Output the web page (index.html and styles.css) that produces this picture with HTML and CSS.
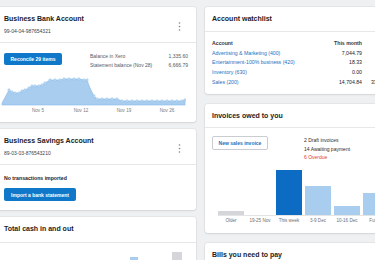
FILE: index.html
```html
<!DOCTYPE html>
<html lang="en">
<head>
    <meta charset="UTF-8">
    <meta name="viewport" content="width=device-width, initial-scale=1.0">
    <title>Dashboard</title>
    <link rel="stylesheet" href="styles.css">
</head>
<body>
    <div class="board">
        <!-- left column -->
        <div class="col col-left">
            <div class="card bank-card">
                <div class="card-head acct-head">
                    <div>
                        <div class="card-title">Business Bank Account</div>
                        <div class="acct-no">99-04-04-987654321</div>
                    </div>
                    <svg class="kebab" width="3" height="9" viewBox="0 0 3 9"><circle cx="1.5" cy="1" r="0.8"/><circle cx="1.5" cy="4.5" r="0.8"/><circle cx="1.5" cy="8" r="0.8"/></svg>
                </div>
                <div class="bank-body">
                    <div class="bank-top">
                        <button class="btn-blue btn-reconcile">Reconcile 29 items</button>
                        <table class="balances">
                            <tr><td>Balance in Xero</td><td class="num">1,335.60</td></tr>
                            <tr><td>Statement balance (Nov 28)</td><td class="num">6,666.79</td></tr>
                        </table>
                    </div>
                    <svg class="bank-chart" width="186" height="40" viewBox="3 76 186 40">
                        <path class="area" d="M5 106 L5 105 L12 92 L15 94 L18 95 L22 95 L25 93 L28 92 L32 90 L35 88 L38 88 L42 88 L45 87 L48 85 L53 82 L58 82 L63 82 L67 81 L72 81 L77 81 L82 81 L87 82 L90 82 L93 90 L97 98 L100 101 L105 101 L110 101 L115 101 L120 101 L125 103 L130 103 L135 103 L140 103 L145 103 L150 103 L155 103 L160 103 L165 103 L170 103 L175 103 L180 103 L185 103 L188 102 L188 107 L5 107 Z"/>
                        <g class="dots">
                            <circle cx="12" cy="92" r="1.2"/><circle cx="15" cy="94" r="1.2"/><circle cx="18" cy="95" r="1.2"/><circle cx="22" cy="95" r="1.2"/><circle cx="25" cy="93" r="1.2"/><circle cx="28" cy="92" r="1.2"/><circle cx="32" cy="90" r="1.2"/><circle cx="35" cy="88" r="1.2"/><circle cx="38" cy="88" r="1.2"/><circle cx="42" cy="88" r="1.2"/><circle cx="45" cy="87" r="1.2"/><circle cx="48" cy="85" r="1.2"/><circle cx="53" cy="82" r="1.2"/><circle cx="58" cy="82" r="1.2"/><circle cx="63" cy="82" r="1.2"/><circle cx="67" cy="81" r="1.2"/><circle cx="72" cy="81" r="1.2"/><circle cx="77" cy="81" r="1.2"/><circle cx="82" cy="81" r="1.2"/><circle cx="87" cy="82" r="1.2"/><circle cx="90" cy="82" r="1.2"/><circle cx="97" cy="98" r="1.2"/><circle cx="100" cy="101" r="1.2"/><circle cx="105" cy="101" r="1.2"/><circle cx="110" cy="101" r="1.2"/><circle cx="115" cy="101" r="1.2"/><circle cx="120" cy="101" r="1.2"/><circle cx="125" cy="103" r="1.2"/><circle cx="130" cy="103" r="1.2"/><circle cx="135" cy="103" r="1.2"/><circle cx="140" cy="103" r="1.2"/><circle cx="145" cy="103" r="1.2"/><circle cx="150" cy="103" r="1.2"/><circle cx="155" cy="103" r="1.2"/><circle cx="160" cy="103" r="1.2"/><circle cx="165" cy="103" r="1.2"/><circle cx="170" cy="103" r="1.2"/><circle cx="175" cy="103" r="1.2"/><circle cx="180" cy="103" r="1.2"/><circle cx="185" cy="103" r="1.2"/><circle cx="188" cy="102" r="1.2"/>
                        </g>
                        <g class="axis-labels">
                            <text x="41" y="114">Nov 5</text>
                            <text x="84" y="114">Nov 12</text>
                            <text x="127" y="114">Nov 19</text>
                            <text x="170" y="114">Nov 26</text>
                        </g>
                    </svg>
                </div>
            </div>

            <div class="card savings-card">
                <div class="card-head acct-head">
                    <div>
                        <div class="card-title">Business Savings Account</div>
                        <div class="acct-no">89-03-03-876543210</div>
                    </div>
                    <svg class="kebab" width="3" height="9" viewBox="0 0 3 9"><circle cx="1.5" cy="1" r="0.8"/><circle cx="1.5" cy="4.5" r="0.8"/><circle cx="1.5" cy="8" r="0.8"/></svg>
                </div>
                <div class="savings-body">
                    <div class="no-tx">No transactions imported</div>
                    <button class="btn-blue btn-import">Import a bank statement</button>
                </div>
            </div>

            <div class="card cash-card">
                <div class="card-head plain-head">
                    <div class="card-title">Total cash in and out</div>
                </div>
                <div class="cash-bars">
                    <div class="cash-bar in"></div>
                    <div class="cash-bar out"></div>
                </div>
            </div>
        </div>

        <!-- right column -->
        <div class="col col-right">
            <div class="card watch-card">
                <div class="card-head plain-head">
                    <div class="card-title">Account watchlist</div>
                </div>
                <div class="watch-table">
                    <div class="th">Account</div><div class="th num">This month</div><div class="th num">YTD</div>
                    <a class="link">Advertising &amp; Marketing (400)</a><div class="num">7,044.79</div><div class="num">844.00</div>
                    <a class="link">Entertainment-100% business (420)</a><div class="num">18.33</div><div class="num">96.40</div>
                    <a class="link">Inventory (630)</a><div class="num">0.00</div><div class="num">0.00</div>
                    <a class="link">Sales (200)</a><div class="num">14,704.84</div><div class="num">33,421.54</div>
                </div>
            </div>

            <div class="card invoice-card">
                <div class="card-head plain-head">
                    <div class="card-title">Invoices owed to you</div>
                </div>
                <div class="invoice-body">
                    <div class="invoice-top">
                        <button class="btn-outline">New sales invoice</button>
                        <div class="inv-stats">
                            <div>2 Draft invoices</div><div class="num">540.00</div>
                            <div>14 Awaiting payment</div><div class="num">21,856.70</div>
                            <div class="overdue">6 Overdue</div><div class="num overdue">342.50</div>
                        </div>
                    </div>
                    <div class="inv-chart">
                        <div class="inv-bars">
                            <div class="slot"><div class="bar grey" style="height:4px"></div></div>
                            <div class="slot"></div>
                            <div class="slot"><div class="bar dark" style="height:45px"></div></div>
                            <div class="slot"><div class="bar light" style="height:29px"></div></div>
                            <div class="slot"><div class="bar light" style="height:9px"></div></div>
                            <div class="slot"><div class="bar light" style="height:22px"></div></div>
                        </div>
                        <div class="inv-labels">
                            <span>Older</span><span>19-25 Nov</span><span>This week</span><span>3-9 Dec</span><span>10-16 Dec</span><span>Future</span>
                        </div>
                    </div>
                </div>
            </div>

            <div class="card bills-card">
                <div class="card-head plain-head">
                    <div class="card-title">Bills you need to pay</div>
                </div>
            </div>
        </div>
    </div>
</body>
</html>
```

FILE: styles.css
```css
body {
    margin: 0;
    background-color: #eef0f2;
    font-family: "Liberation Sans", Arial, sans-serif;
    color: #1e2124;
    overflow: hidden;
}

.board {
    display: flex;
    gap: 9px;
    padding-top: 7px;
    margin-left: -3px;
    width: 420px;
}

.col {
    display: flex;
    flex-direction: column;
}

.col-left {
    width: 199px;
    gap: 7px;
}

.col-right {
    width: 200px;
    gap: 10px;
}

.card {
    background-color: white;
    border-radius: 3px;
    box-shadow: 0 0 0 1px rgba(0,0,0,0.04), 0 1px 2px rgba(0,0,0,0.08);
    overflow: hidden;
}

.card-head {
    border-bottom: 1px solid #e6e7e9;
    box-sizing: border-box;
}

.acct-head {
    height: 36px;
    padding: 7px 15px 0 7px;
    display: flex;
    justify-content: space-between;
    align-items: flex-start;
}

.plain-head {
    height: 26px;
    padding: 7px 7px 0 7px;
}

.card-title {
    font-size: 7px;
    font-weight: bold;
    line-height: 10px;
    color: #1b1d1f;
}

.acct-no {
    font-size: 5px;
    line-height: 8px;
    margin-top: 3px;
    color: #3c3f42;
}

.kebab {
    margin-top: 8px;
    fill: #808489;
}

/* buttons */
.btn-blue {
    display: block;
    background-color: #0f78c9;
    color: white;
    border: none;
    border-radius: 2px;
    font-family: inherit;
    font-size: 5px;
    font-weight: bold;
    padding: 0;
}

.btn-outline {
    background-color: white;
    border: 1px solid #c9ccd0;
    border-radius: 2px;
    color: #1b6fbd;
    font-family: inherit;
    font-size: 5px;
    font-weight: bold;
    width: 56px;
    height: 14px;
    padding: 0;
}

/* bank account card */
.bank-card {
    height: 115px;
}

.bank-body {
    padding: 9px 8px 0 7px;
}

.bank-top {
    display: flex;
    justify-content: space-between;
    align-items: flex-start;
}

.btn-reconcile {
    width: 58px;
    height: 12px;
    margin-top: 1px;
}

.balances {
    border-collapse: collapse;
    font-size: 5px;
    color: #55595e;
    width: 98px;
}

.balances td {
    padding: 0;
    height: 9px;
    line-height: 9px;
}

.num {
    text-align: right;
}

.bank-chart {
    display: block;
    margin: 4px 0 0 -4px;
}

.bank-chart .area {
    fill: #a8cdef;
    stroke: #84b9e6;
    stroke-width: 0.6;
}

.bank-chart .dots circle {
    fill: #cfe3f6;
    stroke: #86bbe7;
    stroke-width: 0.5;
}

.axis-labels text {
    font-size: 4.6px;
    fill: #777b80;
    text-anchor: middle;
}

/* savings card */
.savings-card {
    height: 81px;
}

.savings-body {
    padding: 9px 7px 0 7px;
}

.no-tx {
    font-size: 5.2px;
    font-weight: bold;
    line-height: 8px;
}

.btn-import {
    margin-top: 6px;
    width: 72px;
    height: 13px;
}

/* cash card */
.cash-card {
    height: 80px;
}

.cash-bars {
    display: flex;
    align-items: flex-end;
    height: 34px;
    padding-left: 133px;
    gap: 34px;
}

.cash-bar {
    width: 8px;
}

.cash-bar.in {
    height: 20px;
    background-color: #a8cdef;
}

.cash-bar.out {
    width: 10px;
    height: 25px;
    background-color: #d4d6d9;
}

/* watchlist */
.watch-card {
    height: 87px;
}

.watch-card .plain-head {
    height: 25px;
}

.watch-table {
    display: grid;
    grid-template-columns: 110px 40px 32px;
    padding: 7px 0 0 7px;
    font-size: 5.2px;
    line-height: 9.7px;
}

.watch-table .th {
    font-weight: bold;
    color: #33363a;
}

.link {
    color: #1f70c1;
    white-space: nowrap;
}

/* invoices */
.invoice-card {
    height: 129px;
}

.invoice-card .plain-head {
    height: 24px;
}

.invoice-body {
    padding: 8px 0 0 7px;
}

.invoice-top {
    display: flex;
    align-items: flex-start;
    height: 34px;
}

.inv-stats {
    display: grid;
    grid-template-columns: 60px 38px;
    margin-left: 36px;
    font-size: 5px;
    line-height: 8.5px;
    color: #2a2d30;
}

.overdue {
    color: #de3b35;
}

.inv-chart {
    margin-left: 6px;
}

.inv-bars {
    display: flex;
    gap: 3px;
    height: 45px;
    align-items: flex-end;
    border-bottom: 1px solid #e3e4e6;
}

.slot {
    width: 26px;
    flex-shrink: 0;
}

.bar.grey {
    background-color: #d4d6d9;
}

.bar.dark {
    background-color: #0c6cc4;
}

.bar.light {
    background-color: #a8cdef;
}

.inv-labels {
    display: flex;
    gap: 3px;
    font-size: 4.6px;
    color: #6d7176;
    line-height: 10px;
}

.inv-labels span {
    width: 26px;
    flex-shrink: 0;
    text-align: center;
    white-space: nowrap;
}

.bills-card {
    height: 40px;
}
```
